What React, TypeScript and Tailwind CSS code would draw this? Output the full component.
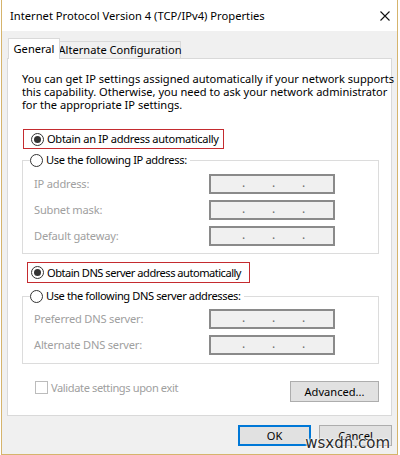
import React from "react";

const font = { fontFamily: '"Noto Sans", "Open Sans", sans-serif' };

function Radio({ checked }: { checked?: boolean }) {
  return (
    <span className="w-[13px] h-[13px] rounded-full border border-[#333333] bg-white flex items-center justify-center shrink-0">
      {checked && <span className="w-[7px] h-[7px] rounded-full bg-[#333333]" />}
    </span>
  );
}

function IpBox() {
  return (
    <div className="w-[126px] h-[20px] border-2 border-[#8a8a8a] bg-[#f0f0f0] flex items-end pb-[3px] pl-[31px] text-[#6d6d6d] text-[12px] leading-[12px]">
      <span className="w-[30px]">.</span>
      <span className="w-[30px]">.</span>
      <span className="w-[30px]">.</span>
    </div>
  );
}

function Row({ label }: { label: string }) {
  return (
    <div className="flex items-center h-[20px]">
      <span className="w-[186px] pl-[11px] text-[#a0a0a0] whitespace-nowrap tracking-[-0.2px]">{label}</span>
      <IpBox />
    </div>
  );
}

export default function App() {
  return (
    <div className="w-[400px] h-[455px] bg-white text-[11.1px] leading-[16px] text-black overflow-hidden" style={font}>
      <div className="ml-[1px] w-[397px] h-[455px] border-x border-b border-[#d6b46c] bg-[#f0f0f0] flex flex-col">
        {/* title bar */}
        <div className="h-[31px] bg-white flex items-center justify-between pl-[8px] pr-[7px] shrink-0">
          <span className="whitespace-nowrap text-[11.2px]">Internet Protocol Version 4 (TCP/IPv4) Properties</span>
          <svg width="10" height="10" viewBox="0 0 10 10">
            <path d="M0.5 0.5 L9.5 9.5 M9.5 0.5 L0.5 9.5" stroke="#111" strokeWidth="1.1" />
          </svg>
        </div>

        {/* tabs */}
        <div className="flex items-end pt-[7px] ml-[6px]">
          <div className="h-[21px] w-[52px] bg-white border border-b-0 border-[#d9d9d9] relative z-10 -mb-px flex items-center justify-center whitespace-nowrap">
            General
          </div>
          <div className="h-[17px] w-[122px] -ml-px border border-b-0 border-[#d9d9d9] flex items-center justify-center whitespace-nowrap">
            Alternate Configuration
          </div>
        </div>

        {/* panel */}
        <div className="mx-[5px] w-[385px] bg-white border border-[#d9d9d9] pt-[13px] pb-[13px]">
          <p className="pl-[14px] leading-[13px] whitespace-nowrap">
            You can get IP settings assigned automatically if your network supports
            <br />
            this capability. Otherwise, you need to ask your network administrator
            <br />
            for the appropriate IP settings.
          </p>

          <div className="mt-[18px] ml-[15px] w-[201px] h-[20px] border border-[#c42b2f] flex items-center pl-[7px] gap-[3px]">
            <Radio checked />
            <span className="whitespace-nowrap tracking-[-0.3px]">Obtain an IP address automatically</span>
          </div>

          <fieldset className="mt-[3px] ml-[14px] w-[357px] border border-[#dcdcdc] pb-[7px]">
            <legend className="ml-[7px] pr-[3px] flex items-center gap-[3px] h-[16px]">
              <Radio />
              <span className="whitespace-nowrap tracking-[-0.35px]">Use the following IP address:</span>
            </legend>
            <div className="flex flex-col gap-[6px] pt-[6px]">
              <Row label="IP address:" />
              <Row label="Subnet mask:" />
              <Row label="Default gateway:" />
            </div>
          </fieldset>

          <div className="mt-[8px] ml-[19px] w-[223px] h-[21px] border border-[#c42b2f] flex items-center pl-[3px] gap-[3px]">
            <Radio checked />
            <span className="whitespace-nowrap tracking-[-0.5px]">Obtain DNS server address automatically</span>
          </div>

          <fieldset className="mt-[5px] ml-[14px] w-[357px] border border-[#dcdcdc] pb-[8px]">
            <legend className="ml-[7px] pr-[3px] flex items-center gap-[3px] h-[16px]">
              <Radio />
              <span className="whitespace-nowrap tracking-[-0.4px]">Use the following DNS server addresses:</span>
            </legend>
            <div className="flex flex-col gap-[6px] pt-[5px]">
              <Row label="Preferred DNS server:" />
              <Row label="Alternate DNS server:" />
            </div>
          </fieldset>

          <div className="mt-[17px] flex items-start justify-between pl-[27px] pr-[12px]">
            <div className="flex items-center gap-[3px] h-[13px]">
              <span className="w-[13px] h-[13px] border border-[#bcbcbc] bg-white" />
              <span className="text-[#a0a0a0] whitespace-nowrap tracking-[-0.4px]">Validate settings upon exit</span>
            </div>
            <div className="w-[89px] h-[21px] bg-[#e1e1e1] border border-[#adadad] flex items-center justify-center">
              Advanced...
            </div>
          </div>
        </div>

        {/* buttons */}
        <div className="relative mt-[9px] mr-[5px] flex justify-end gap-[8px]">
          <div className="w-[73px] h-[21px] bg-[#e1e1e1] border-2 border-[#0078d7] flex items-center justify-center">
            OK
          </div>
          <div className="w-[73px] h-[21px] bg-[#e1e1e1] border border-[#adadad] flex items-center justify-center">
            Cancel
          </div>
          <span
            className="absolute right-[2px] top-[11px] text-[15px] leading-[15px] text-[#2b2b2b] [text-shadow:0_0_2px_#fff,0_0_2px_#fff,0_0_2px_#fff]"
            style={{ fontFamily: '"DejaVu Sans", sans-serif' }}
          >
            wsxdn.com
          </span>
        </div>
      </div>
    </div>
  );
}
